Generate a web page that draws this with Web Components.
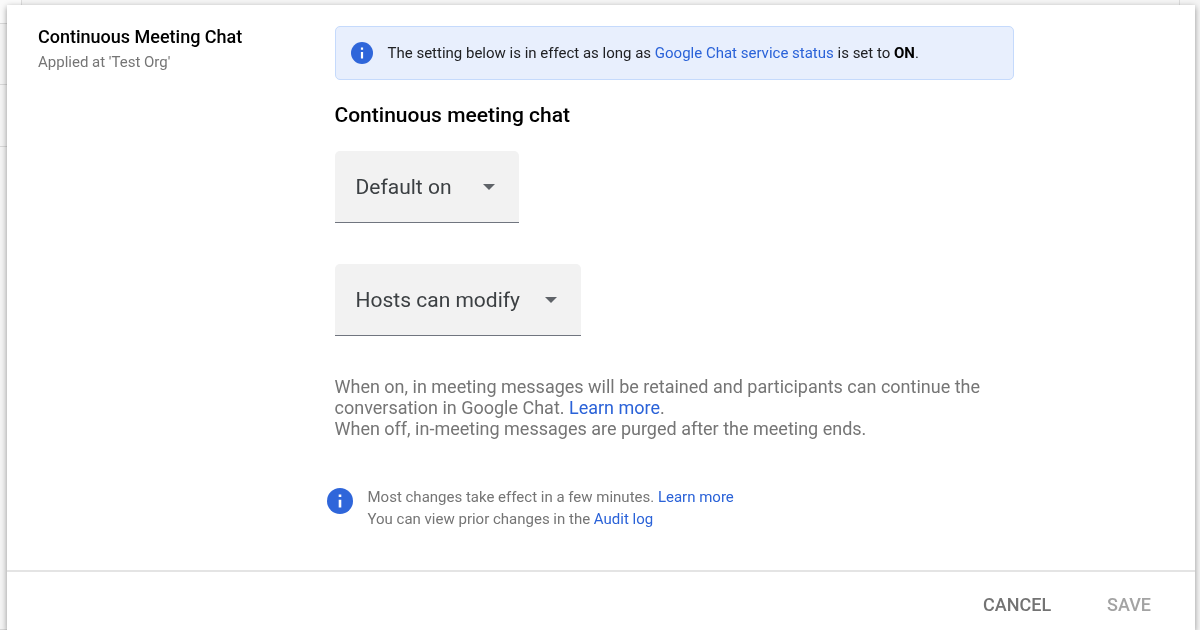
<!DOCTYPE html>
<html lang="en">
<head>
<meta charset="utf-8">
<meta name="viewport" content="width=device-width, initial-scale=1">
<title>Continuous Meeting Chat</title>
<style>
    :root {
        --link-color: #2a62d8;
        --muted-color: #757575;
    }
    body {
        margin: 0;
        min-height: 100vh;
        display: flex;
        flex-direction: column;
        background: #f4f4f4;
        color: #000;
        font-family: Roboto, "Liberation Sans", sans-serif;
        font-size: 16px;
    }
    settings-card {
        flex: 1;
        margin: 5px 5px 0 7px;
    }
    a {
        color: var(--link-color);
        text-decoration: none;
    }
</style>
</head>
<body>
<page-backdrop></page-backdrop>
<settings-card heading="Continuous Meeting Chat" applied="Applied at 'Test Org'">
    <info-banner>The setting below is in effect as long as <a href="#status">Google Chat service status</a> is set to <b>ON</b>.</info-banner>
    <setting-section heading="Continuous meeting chat">
        <setting-select label="Chat default" options="Default on,Default off"></setting-select>
        <setting-select label="Host control" options="Hosts can modify,Locked"></setting-select>
        <span slot="description">When on, in meeting messages will be retained and participants can continue the conversation in Google Chat. <a href="#learn">Learn more</a>.<br>When off, in-meeting messages are purged after the meeting ends.</span>
    </setting-section>
    <info-note>Most changes take effect in a few minutes. <a href="#changes">Learn more</a><br>You can view prior changes in the <a href="#audit">Audit log</a></info-note>
    <card-actions slot="footer"></card-actions>
</settings-card>

<script>
// page that stays visible around the edges of the card
class PageBackdrop extends HTMLElement {
    constructor() {
        super();
        this.attachShadow({ mode: 'open' });
        this.shadowRoot.innerHTML = `
            <style>
                :host {
                    position: fixed;
                    inset: 0;
                    z-index: -1;
                    display: grid;
                    grid-template-columns: 22px 1fr 20px;
                }
                .rail {
                    display: grid;
                    grid-template-rows: 24px 61px 62px 1fr;
                    border-right: 1px solid #dcdcdc;
                }
                .rail div {
                    border-bottom: 1px solid #d8d8d8;
                }
                .rail div:first-child {
                    background: #fafafa;
                }
                .content {
                    border-right: 1px solid #dcdcdc;
                }
            </style>
            <div class="rail"><div></div><div></div><div></div><div></div></div>
            <div class="content"></div>
        `;
    }
}

class SettingsCard extends HTMLElement {
    constructor() {
        super();
        this.attachShadow({ mode: 'open' });
    }

    connectedCallback() {
        this.shadowRoot.innerHTML = `
            <style>
                :host {
                    display: flex;
                    flex-direction: column;
                    background: #fff;
                    box-shadow: 0 2px 6px rgba(0, 0, 0, 0.4);
                }
                .body {
                    flex: 1;
                    display: grid;
                    grid-template-columns: 25% 1fr;
                    gap: 15px;
                    padding: 21px 31px 36px;
                }
                h1 {
                    margin: 0;
                    font-size: 18px;
                    font-weight: 500;
                    line-height: 22px;
                }
                p {
                    margin: 3px 0 0;
                    color: var(--muted-color);
                    font-size: 15px;
                    line-height: 22px;
                }
                .content {
                    max-width: 679px;
                }
            </style>
            <div class="body">
                <header>
                    <h1>${this.getAttribute('heading')}</h1>
                    <p>${this.getAttribute('applied')}</p>
                </header>
                <div class="content"><slot></slot></div>
            </div>
            <slot name="footer"></slot>
        `;
    }
}

class InfoIcon extends HTMLElement {
    constructor() {
        super();
        this.attachShadow({ mode: 'open' });
        this.shadowRoot.innerHTML = `
            <style>
                :host {
                    display: block;
                    flex: none;
                    width: var(--icon-size, 22px);
                    height: var(--icon-size, 22px);
                }
                svg {
                    display: block;
                    width: 100%;
                    height: 100%;
                }
            </style>
            <svg viewBox="2 2 20 20" aria-hidden="true">
                <circle cx="12" cy="12" r="10" fill="#2f66da"/>
                <path d="M11 7h2v2h-2zM11 11h2v6h-2z" fill="#fff"/>
            </svg>
        `;
    }
}

class InfoBanner extends HTMLElement {
    constructor() {
        super();
        this.attachShadow({ mode: 'open' });
        this.shadowRoot.innerHTML = `
            <style>
                :host {
                    display: flex;
                    align-items: center;
                    gap: 15px;
                    padding: 15px;
                    border: 1px solid #c5dafc;
                    border-radius: 5px;
                    background: #e8effd;
                    color: #202124;
                    font-size: 15px;
                    line-height: 22px;
                }
                ::slotted(b) {
                    color: #000;
                }
            </style>
            <info-icon></info-icon>
            <div><slot></slot></div>
        `;
    }
}

class SettingSection extends HTMLElement {
    constructor() {
        super();
        this.attachShadow({ mode: 'open' });
    }

    connectedCallback() {
        this.shadowRoot.innerHTML = `
            <style>
                :host {
                    display: block;
                    margin-top: 23px;
                }
                h2 {
                    margin: 0 0 24px;
                    font-size: 21px;
                    font-weight: 500;
                    line-height: 24px;
                }
                .fields {
                    display: flex;
                    flex-direction: column;
                    align-items: flex-start;
                    gap: 41px;
                }
                p {
                    margin: 40px 0 0;
                    color: var(--muted-color);
                    font-size: 18px;
                    line-height: 21px;
                }
            </style>
            <h2>${this.getAttribute('heading')}</h2>
            <div class="fields"><slot></slot></div>
            <p><slot name="description"></slot></p>
        `;
    }
}

class SettingSelect extends HTMLElement {
    constructor() {
        super();
        this.attachShadow({ mode: 'open' });
    }

    connectedCallback() {
        const label = this.getAttribute('label');
        const options = this.getAttribute('options').split(',');

        this.shadowRoot.innerHTML = `
            <style>
                :host {
                    display: grid;
                    align-items: center;
                }
                select, svg {
                    grid-area: 1 / 1;
                }
                select {
                    appearance: none;
                    min-width: 184px;
                    height: 72px;
                    padding: 0 60px 0 21px;
                    border: 0;
                    border-bottom: 1px solid #70757f;
                    border-radius: 5px 5px 0 0;
                    background: #f2f2f2;
                    color: #3c4043;
                    font: 21px Roboto, "Liberation Sans", sans-serif;
                }
                svg {
                    justify-self: end;
                    width: 12px;
                    height: 6px;
                    margin-right: 24px;
                    pointer-events: none;
                }
            </style>
            <select aria-label="${label}">
                ${options.map(option => `<option>${option}</option>`).join('')}
            </select>
            <svg viewBox="0 0 12 6" aria-hidden="true"><path d="M0 0h12L6 6z" fill="#5f6368"/></svg>
        `;
    }
}

class InfoNote extends HTMLElement {
    constructor() {
        super();
        this.attachShadow({ mode: 'open' });
        this.shadowRoot.innerHTML = `
            <style>
                :host {
                    --icon-size: 26px;
                    display: flex;
                    align-items: flex-start;
                    gap: 15px;
                    margin: 47px 0 0 -8px;
                    color: var(--muted-color);
                    font-size: 15px;
                    line-height: 22px;
                }
                info-icon {
                    margin-top: 2px;
                }
            </style>
            <info-icon></info-icon>
            <div><slot></slot></div>
        `;
    }
}

class CardActions extends HTMLElement {
    constructor() {
        super();
        this.attachShadow({ mode: 'open' });
        this.shadowRoot.innerHTML = `
            <style>
                :host {
                    display: flex;
                    justify-content: flex-end;
                    gap: 24px;
                    padding: 11px 28px 3px;
                    border-top: 2px solid #e4e4e4;
                }
                button {
                    padding: 11px 16px;
                    border: 0;
                    background: none;
                    color: #737373;
                    font: 500 18px/22px Roboto, "Liberation Sans", sans-serif;
                    cursor: pointer;
                }
                button:disabled {
                    color: #a3a3a3;
                    cursor: default;
                }
            </style>
            <button type="button">CANCEL</button>
            <button type="submit" disabled>SAVE</button>
        `;
    }
}

customElements.define('page-backdrop', PageBackdrop);
customElements.define('info-icon', InfoIcon);
customElements.define('info-banner', InfoBanner);
customElements.define('setting-select', SettingSelect);
customElements.define('setting-section', SettingSection);
customElements.define('info-note', InfoNote);
customElements.define('card-actions', CardActions);
customElements.define('settings-card', SettingsCard);
</script>
</body>
</html>
